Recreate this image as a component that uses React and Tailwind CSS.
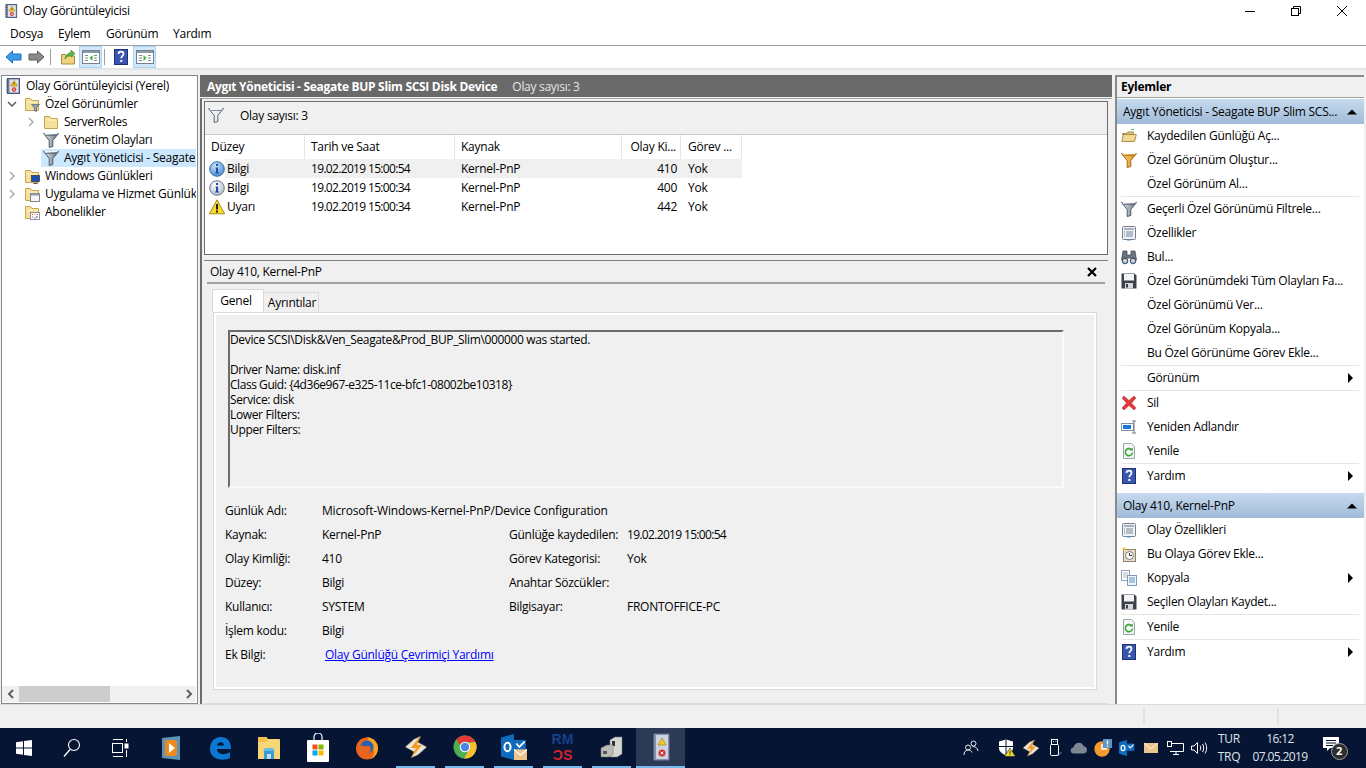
import React from 'react';

// --- small drawn icons ---
const Svg = ({ s = 16, children, className = '' }) => (
  <svg width={s} height={s} viewBox="0 0 16 16" className={`shrink-0 ${className}`}>
    {children}
  </svg>
);

const LogBook = ({ s = 16 }) => (
  <Svg s={s}>
    <rect x="2.5" y="0.5" width="12" height="15" fill="#7f8fb0" stroke="#46557a" />
    <rect x="4.5" y="1.5" width="9" height="13" fill="#dfe4ec" />
    <path d="M1 2h3M1 4h3M1 6h3M1 8h3M1 10h3M1 12h3M1 14h3" stroke="#5a6478" strokeWidth="0.9" />
    <path d="M9 2.5 L12.5 8 H5.5 Z" fill="#f6c91e" stroke="#a97f10" strokeWidth="0.6" />
    <path d="M9 4.5v2" stroke="#222" strokeWidth="0.9" />
    <circle cx="9" cy="11.5" r="2.3" fill="#d6332f" />
    <path d="M8 10.5l2 2M10 10.5l-2 2" stroke="#fff" strokeWidth="0.7" />
  </Svg>
);

const funnelShades = {
  grey: ['#e4eaf0', '#66737f', '#4f5a66'],
  white: ['#ffffff', '#d5dbe1', '#5b646e'],
  orange: ['#fbd36a', '#e6871c', '#9a6a20'],
};

const Funnel = ({ s = 16, shade = 'grey' }) => {
  const [from, to, line] = funnelShades[shade];
  return (
    <Svg s={s}>
      <defs>
        <linearGradient id={`funnel-${shade}`} x1="0" y1="0" x2="1" y2="0">
          <stop offset="0" stopColor={from} />
          <stop offset="1" stopColor={to} />
        </linearGradient>
      </defs>
      <path d="M0.5 1.5h15L9.8 8.5v6L6.2 15.5v-7z" fill={`url(#funnel-${shade})`} stroke={line} />
      <path d="M1.500 1.500h13" stroke="#f4f7fa" />
      <path d="M2.5 3.500h11" stroke={line} strokeWidth="0.7" />
    </Svg>
  );
};

const FolderBase = () => (
  <>
    <path d="M1.5 2.5h5l1.5 2h6.5v10h-13z" fill="#f6df98" stroke="#c7a653" />
    <path d="M2.5 5.5h11v1h-11z" fill="#fdf3cf" />
  </>
);

const FolderPlain = () => (
  <Svg>
    <FolderBase />
  </Svg>
);

const FolderFunnel = () => (
  <Svg>
    <FolderBase />
    <path d="M7.5 8.5h8l-3 3.5v3.5l-2-.8V12z" fill="#93a2b2" stroke="#56606c" strokeWidth="0.7" />
  </Svg>
);

const FolderMonitor = () => (
  <Svg>
    <FolderBase />
    <rect x="7.5" y="7.5" width="8" height="6" fill="#1d4fb8" stroke="#333" strokeWidth="0.7" />
    <path d="M9.5 15.5h4" stroke="#555" />
  </Svg>
);

const FolderWindow = () => (
  <Svg>
    <FolderBase />
    <rect x="6.5" y="7.5" width="9" height="8" fill="#f5f5f5" stroke="#667" strokeWidth="0.8" />
    <rect x="6.5" y="7.5" width="9" height="2" fill="#8f9db0" />
  </Svg>
);

const FolderCalendar = () => (
  <Svg>
    <FolderBase />
    <rect x="6.5" y="8.5" width="9" height="7" fill="#fff" stroke="#778" strokeWidth="0.8" />
    <path d="M8 10.5h1M10.5 10.5h1M13 10.5h1M8 13h1M13 13h1" stroke="#d14a3a" />
    <path d="M10 13.5l1 1 2-2.5" stroke="#2e6fc7" fill="none" strokeWidth="0.8" />
  </Svg>
);

const Chevron = ({ open, color = '#a6a6a6' }) => (
  <svg width="12" height="12" viewBox="0 0 12 12" className="shrink-0">
    {open ? (
      <path d="M2 4l4 4 4-4" fill="none" stroke="#555" strokeWidth="1.4" />
    ) : (
      <path d="M4 2l4 4-4 4" fill="none" stroke={color} strokeWidth="1.4" />
    )}
  </svg>
);

const InfoIcon = ({ active }) => (
  <Svg>
    <defs>
      <radialGradient id={active ? 'infoA' : 'infoB'} cx="0.4" cy="0.3" r="0.8">
        <stop offset="0" stopColor={active ? '#c7e3fb' : '#ffffff'} />
        <stop offset="1" stopColor={active ? '#3a82cf' : '#a9b6c8'} />
      </radialGradient>
    </defs>
    <circle cx="8" cy="8" r="7.3" fill={`url(#${active ? 'infoA' : 'infoB'})`} stroke={active ? '#3b6ea5' : '#70798a'} />
    <rect x="7" y="3" width="2" height="2" fill="#1c4fa8" />
    <path d="M6.5 6.5h2.5v5h1v1h-4v-1h1v-4h-.5z" fill="#1c4fa8" />
  </Svg>
);

const WarnIcon = () => (
  <Svg>
    <path d="M8 0.8 L15.6 14.8 H0.4 Z" fill="#f8d92e" stroke="#a88a18" />
    <rect x="7" y="5" width="2" height="5.5" fill="#222" />
    <rect x="7" y="11.5" width="2" height="2" fill="#222" />
  </Svg>
);

const HelpIcon = ({ s = 16 }) => (
  <Svg s={s}>
    <rect x="1.5" y="0.5" width="13" height="15" fill="#3856b0" stroke="#1f3278" />
    <path d="M5.5 5c0-3.2 5-3.2 5 0 0 2-2.2 2-2.2 4.2" fill="none" stroke="#fff" strokeWidth="1.7" />
    <rect x="7.3" y="11" width="2" height="2" fill="#fff" />
  </Svg>
);

const Arrow = ({ left, fill, stroke }) => (
  <svg width="17" height="14" viewBox="0 0 17 14" className="shrink-0">
    <path
      d={left ? 'M1 7 L7.5 1 V4 H16 V10 H7.5 V13 Z' : 'M16 7 L9.5 1 V4 H1 V10 H9.5 V13 Z'}
      fill={fill}
      stroke={stroke}
    />
  </svg>
);

const PaneIcon = ({ right }) => (
  <svg width="18" height="14" viewBox="0 0 18 14">
    <rect x="0.5" y="0.5" width="17" height="13" fill="#fff" stroke="#75808e" />
    <rect x="1" y="1" width="16" height="2" fill="#8e99a6" />
    <path d="M3 5.5h3M3 8h3M3 10.5h3M12 5.5h3M12 8h3M12 10.5h3" stroke="#7f8a98" />
    {right ? <path d="M7.5 5l3 3-3 3z" fill="#3fb536" /> : <path d="M10.5 5l-3 3 3 3z" fill="#3fb536" />}
  </svg>
);

const UpFolder = () => (
  <Svg>
    <path d="M1.5 5.5h4l1 1.5h8v8h-13z" fill="#f0d27e" stroke="#a98b3d" />
    <path d="M5 10c.5-4 3-6 6-6.5V1l4 3.5L11 8V6c-2.5.3-4.5 1.5-6 4z" fill="#58b947" stroke="#2f8228" strokeWidth="0.6" />
  </Svg>
);

const OpenFolder = () => (
  <Svg>
    <path d="M1.5 5.5h4l1-1.5h6v2.5h-11z" fill="#d9c07f" stroke="#a78c4d" />
    <path d="M0.8 13.5l1.5-7h13l-1.8 7z" fill="#f0d995" stroke="#a78c4d" />
    <path d="M10 1.5h3" stroke="#59b84a" />
  </Svg>
);

const Properties = () => (
  <Svg>
    <rect x="1.5" y="1.5" width="13" height="13" rx="1" fill="#eef1f5" stroke="#77818e" />
    <rect x="3" y="3" width="10" height="2" fill="#a7b1bd" />
    <path d="M5 7h7M5 9h7M5 11h7" stroke="#7d8896" />
    <path d="M3 7h1M3 9h1M3 11h1" stroke="#7d8896" />
    <path d="M6 15h4" stroke="#3d9be0" />
  </Svg>
);

const Binoculars = () => (
  <Svg>
    <path d="M2 2h4v4h4V2h4l1.500 9h-5L10 9H6l-.5 2h-5z" fill="#6a7380" stroke="#39404a" strokeWidth="0.7" />
    <circle cx="4" cy="12" r="2.8" fill="#c7d2de" stroke="#39404a" />
    <circle cx="12" cy="12" r="2.8" fill="#c7d2de" stroke="#39404a" />
    <path d="M2.5 14h3M10.5 14h3" stroke="#2a8fe0" />
  </Svg>
);

const Floppy = () => (
  <Svg>
    <path d="M0.5 0.5h13l2 2v13H0.5z" fill="#3c424b" />
    <rect x="3" y="1" width="10" height="6.5" fill="#f4f4f4" />
    <rect x="4" y="10" width="8" height="5.5" fill="#d5d8dc" />
    <rect x="5" y="11" width="2" height="3.5" fill="#3c424b" />
  </Svg>
);

const RedX = () => (
  <Svg>
    <path d="M1 3l2-2 5 4.5L13 1l2 2-4.5 5 4.5 5-2 2-5-4.5L3 15l-2-2 4.5-5z" fill="#e0393a" stroke="#b5282a" strokeWidth="0.5" />
  </Svg>
);

const Rename = () => (
  <Svg>
    <rect x="0.5" y="4.5" width="12" height="7" fill="#fff" stroke="#8591a0" />
    <rect x="2" y="6" width="8" height="4" fill="#1878e0" />
    <path d="M11 2h4M13 2v12M11 14h4" stroke="#6f7883" fill="none" />
  </Svg>
);

const Refresh = () => (
  <Svg>
    <path d="M2.5 0.5h8l3 3v12h-11z" fill="#f5f6f7" stroke="#9aa3ad" />
    <path d="M11.5 9.5a3.6 3.6 0 1 1-1.2-3" fill="none" stroke="#3aa93a" strokeWidth="1.6" />
    <path d="M11.8 4.2v3.3H8.6z" fill="#3aa93a" />
  </Svg>
);

const TaskClock = () => (
  <Svg>
    <rect x="2.5" y="3.5" width="12" height="12" fill="#e9dcc0" stroke="#8b8374" />
    <circle cx="8.5" cy="9.5" r="4" fill="#fff" stroke="#777" />
    <path d="M8.5 7v2.5H11" stroke="#333" fill="none" />
    <path d="M3 0.5l.8 1.7 1.7.8-1.7.8L3 5.5l-.8-1.7L.5 3l1.7-.8z" fill="#f2b632" />
  </Svg>
);

const CopyIcon = () => (
  <Svg>
    <rect x="0.5" y="0.5" width="8" height="10" fill="#fff" stroke="#98a2ae" />
    <path d="M2 3h5M2 5h5M2 7h5" stroke="#b0b8c2" />
    <rect x="6.5" y="5.5" width="9" height="10" fill="#eef5fc" stroke="#7f9ab8" />
    <path d="M8 8h6M8 10h6M8 12h6" stroke="#5e90c7" />
  </Svg>
);

const Triangle = ({ up }) => (
  <svg width="12" height="12" viewBox="0 0 12 12" className="shrink-0">
    {up ? <path d="M1 8.5 L6 3.5 L11 8.5Z" fill="#000" /> : <path d="M3 1 L8 6 L3 11Z" fill="#000" />}
  </svg>
);

// --- taskbar icons ---
const WinLogo = () => (
  <svg width="16" height="16" viewBox="0 0 16 16">
    <path d="M0 2.2 L7 1.2 V7.5 H0z M8 1 L16 0 V7.5 H8z M0 8.5 H7 V14.8 L0 13.8z M8 8.5 H16 V16 L8 15z" fill="#fff" />
  </svg>
);

const SearchIcon = () => (
  <svg width="18" height="20" viewBox="0 0 18 20">
    <circle cx="11" cy="7" r="5.5" fill="none" stroke="#fff" strokeWidth="1.1" />
    <path d="M7 11.5L1 18.5" stroke="#fff" strokeWidth="1.3" />
  </svg>
);

const TaskView = () => (
  <svg width="18" height="20" viewBox="0 0 18 20" fill="none" stroke="#fff">
    <path d="M2 1.5h10M2 18.5h10" />
    <rect x="1.5" y="5.5" width="10" height="9" />
    <rect x="14" y="6" width="3" height="4" fill="#fff" />
    <path d="M15.5 1v3M15.5 12v7" />
  </svg>
);

const MediaIcon = () => (
  <svg width="20" height="24" viewBox="0 0 20 24">
    <path d="M1 2 L19 0 V24 L1 22z" fill="#5c93b8" />
    <rect x="4" y="4" width="12" height="16" rx="2" fill="#ee8a1d" />
    <path d="M8 7l6 5-6 5z" fill="#fff" />
  </svg>
);

const EdgeIcon = () => (
  <svg width="22" height="24" viewBox="0 0 22 24">
    <path d="M1 13C1 5 6 1 12 1c6 0 10 4 10 12H8c0 5 7 7 13 3v6c-8 4-20 1-20-9zM8 9.5h7C15 5 8.5 5 8 9.5z" fill="#0b78d4" />
  </svg>
);

const ExplorerIcon = () => (
  <svg width="22" height="24" viewBox="0 0 22 24">
    <path d="M0 1h8l2 2h11a1 1 0 0 1 1 1v19H0z" fill="#f7d774" />
    <path d="M0 1h9v5H0z" fill="#f1c04d" />
    <path d="M6 15h10v8H6z" fill="#3a9bd8" />
    <path d="M9 18h4v5H9z" fill="#bfe2f7" />
    <path d="M5 15h12l-2-3H7z" fill="#6ab8e6" />
  </svg>
);

const StoreIcon = () => (
  <svg width="24" height="30" viewBox="0 0 24 30">
    <path d="M8 8V4a4 4 0 0 1 8 0v4" fill="none" stroke="#fff" strokeWidth="1.2" />
    <rect x="1" y="7" width="22" height="22" rx="1" fill="#fff" />
    <rect x="6.5" y="11.5" width="5" height="5" fill="#f25022" />
    <rect x="12.5" y="11.5" width="5" height="5" fill="#7fba00" />
    <rect x="6.5" y="17.5" width="5" height="5" fill="#00a4ef" />
    <rect x="12.5" y="17.5" width="5" height="5" fill="#ffb900" />
  </svg>
);

const FirefoxIcon = () => (
  <svg width="24" height="26" viewBox="0 0 24 26">
    <circle cx="12" cy="13.5" r="11" fill="#e8641f" />
    <path d="M12 2c7 1 11 6 11 11s-3 9-7 11c3-3 4-7 2-11-1-3-4-6-6-11z" fill="#f6a623" />
    <circle cx="12" cy="12" r="6.5" fill="#2a5fb5" />
    <path d="M5 11c3-1 5 1 7 0 3-1 5 3 3 6-2 3-7 4-10 1-1-2-1-5 0-7z" fill="#e8641f" />
  </svg>
);

const BoltIcon = ({ s = 24 }) => (
  <svg width={s} height={s} viewBox="0 0 24 24">
    <path d="M1 12l9-8 7-3-3 6 9 5-9 8-7 3 3-6z" fill="#e9e4d4" stroke="#3a3a3a" strokeWidth="0.6" />
    <path d="M16 1L7 13h5l-5 10 11-13h-5z" fill="#f39a1f" />
  </svg>
);

const ChromeIcon = () => (
  <svg width="24" height="24" viewBox="0 0 24 24">
    <circle cx="12" cy="12" r="11.5" fill="#4caf50" />
    <path d="M12 .5A11.5 11.5 0 0 1 22.4 7H12a5 5 0 0 0-4.7 3.4L3.4 4.6A11.5 11.5 0 0 1 12 .5z" fill="#e53935" />
    <path d="M22.4 7A11.5 11.5 0 0 1 11 23.5L16.2 15A5 5 0 0 0 15.5 8z" fill="#fbc02d" />
    <circle cx="12" cy="12" r="5.3" fill="#fff" />
    <circle cx="12" cy="12" r="4.2" fill="#4a86e8" />
  </svg>
);

const OutlookIcon = ({ s = 22, mail }) => (
  <svg width={s} height={s} viewBox="0 0 22 22">
    <path d="M0 3 L11 0 V22 L0 19z" fill="#0f6cbd" />
    <rect x="11" y="5" width="10" height="10" fill="#0f6cbd" />
    <path d="M13 8l2.5 3L20 6.5" stroke="#fff" strokeWidth="1.5" fill="none" />
    <ellipse cx="5.5" cy="11" rx="2.6" ry="3.6" fill="none" stroke="#fff" strokeWidth="1.7" />
    {mail && <rect x="11" y="13" width="11" height="9" fill="#edc48b" />}
    {mail && <path d="M11 13l5.5 5 5.5-5" fill="none" stroke="#fff" strokeWidth="1" />}
  </svg>
);

const ServerIcon = () => (
  <svg width="24" height="24" viewBox="0 0 24 24">
    <path d="M10 5l5-3h7v17l-5 3h-7z" fill="#d6d6d0" stroke="#777" strokeWidth="0.5" />
    <rect x="12" y="6" width="3" height="5" fill="#333" />
    <path d="M1 13l6-3h6v9l-4 3H1z" fill="#bcbcb6" stroke="#777" strokeWidth="0.5" />
    <rect x="3" y="16" width="4" height="3" fill="#555" />
  </svg>
);

const EventTaskIcon = () => (
  <svg width="20" height="28" viewBox="0 0 20 28">
    <rect x="2.5" y="0.5" width="16" height="27" rx="1" fill="#8090ad" stroke="#4e5b77" />
    <rect x="5" y="2" width="12" height="24" fill="#cdd4df" />
    <path d="M11 5l4 7H7z" fill="#f6c91e" stroke="#8a6c10" strokeWidth="0.5" />
    <circle cx="11" cy="20" r="3.5" fill="#d6332f" />
    <path d="M9.7 18.7l2.6 2.6M12.3 18.7l-2.6 2.6" stroke="#fff" />
  </svg>
);

// --- tray icons ---
const People = () => (
  <svg width="16" height="16" viewBox="0 0 16 16" fill="none" stroke="#fff" strokeWidth="0.9">
    <circle cx="10.5" cy="3.5" r="2.5" />
    <circle cx="5" cy="7.5" r="2.5" />
    <path d="M1 15c0-3 1.5-5 4-5s3.5 1 4 2.5" />
    <path d="M9.5 6.5c3 0 5 1.5 5.5 4.5" />
  </svg>
);

const Shield = () => (
  <svg width="18" height="18" viewBox="0 0 18 18">
    <path d="M1 2.5 L8 0.5 L15 2.5 V9 C15 13 11 15 8 16.5 C5 15 1 13 1 9z" fill="#fff" />
    <path d="M8 0.5v16M1 7.5h14" stroke="#071534" />
    <path d="M12 9l5.5 8.5H6.5z" fill="#f8d92e" stroke="#071534" strokeWidth="0.6" />
    <path d="M12 12v2.5M12 15.2v1" stroke="#222" />
  </svg>
);

const Usb = () => (
  <svg width="14" height="18" viewBox="0 0 14 18" fill="none" stroke="#fff">
    <rect x="2.5" y="5.5" width="8" height="11" rx="1" />
    <rect x="3.5" y="0.5" width="6" height="5" />
    <path d="M5 2.5h.8M7.5 2.5h.8" />
    <path d="M9 15l1.5 1.5L13.5 13" stroke="#8894a8" strokeWidth="0.8" />
  </svg>
);

const Cloud = () => (
  <svg width="18" height="12" viewBox="0 0 18 12">
    <path d="M4 11.5a3 3 0 0 1-.6-6C4.2 2.5 6.5.8 9 .8c2.4 0 4 1.3 4.6 3.4a3.7 3.7 0 0 1 .4 7.3z" fill="#7e8794" />
  </svg>
);

const OrangeClock = () => (
  <svg width="18" height="18" viewBox="0 0 18 18">
    <circle cx="8" cy="10" r="7.7" fill="#f29a2e" />
    <path d="M8 5v5h5" stroke="#fff" strokeWidth="1.4" fill="none" />
    <rect x="9" y="0" width="9" height="9" fill="#5d93c5" />
    <path d="M13.5 1.5v4M13.5 6.5v1.2" stroke="#fff" strokeWidth="1.3" />
  </svg>
);

const MailTray = () => (
  <svg width="14" height="10" viewBox="0 0 14 10">
    <rect width="14" height="10" fill="#edc48b" />
    <path d="M0 0l7 6 7-6" fill="none" stroke="#fff" strokeWidth="0.9" />
  </svg>
);

const Network = () => (
  <svg width="17" height="14" viewBox="0 0 17 14" fill="none" stroke="#fff">
    <path d="M4.5 2.5h12v8H3" />
    <path d="M9 10.5v3M6 13.5h6" />
    <rect x="0.5" y="0.5" width="4" height="5" fill="#071534" />
  </svg>
);

const Volume = () => (
  <svg width="17" height="14" viewBox="0 0 17 14" fill="none" stroke="#fff">
    <path d="M0.5 5h2.5l3.5-3.5v11L3 9H0.5z" />
    <path d="M9 4.5c1 1.5 1 3.5 0 5M11.5 3c1.6 2.5 1.6 5.500 0 8M14 1.500c2.200 3.500 2.200 7.500 0 11" />
  </svg>
);

// --- left tree ---
const treeRows = [
  { text: 'Olay Görüntüleyicisi (Yerel)', icon: <LogBook />, pad: 'pl-[1px]', chevron: null, noSlot: true },
  { text: 'Özel Görünümler', icon: <FolderFunnel />, pad: 'pl-[4px]', chevron: 'open' },
  { text: 'ServerRoles', icon: <FolderPlain />, pad: 'pl-[23px]', chevron: 'closed' },
  { text: 'Yönetim Olayları', icon: <Funnel />, pad: 'pl-[23px]', chevron: 'none' },
  { text: 'Aygıt Yöneticisi - Seagate', icon: <Funnel />, pad: 'pl-[23px]', chevron: 'none', selected: true },
  { text: 'Windows Günlükleri', icon: <FolderMonitor />, pad: 'pl-[4px]', chevron: 'closed' },
  { text: 'Uygulama ve Hizmet Günlük', icon: <FolderWindow />, pad: 'pl-[4px]', chevron: 'closed' },
  { text: 'Abonelikler', icon: <FolderCalendar />, pad: 'pl-[4px]', chevron: 'none' },
];

const TreeRow = ({ row }) => (
  <div className={`flex h-[18px] items-center ${row.pad}`}>
    {!row.noSlot && (
      <span className="flex w-[16px] shrink-0 items-center">
        {row.chevron === 'open' && <Chevron open />}
        {row.chevron === 'closed' && <Chevron />}
      </span>
    )}
    <div className={`flex h-[18px] min-w-0 flex-1 items-center pl-[2px] ${row.selected ? 'bg-[#cce8ff]' : ''}`}>
      {row.icon}
      <span className="ml-[5px] overflow-hidden whitespace-nowrap">{row.text}</span>
    </div>
  </div>
);

const LeftTree = () => (
  <div className="ml-px flex w-[197px] flex-col border border-[#828790] bg-white pr-[1px] pb-[1px]">
    <div className="min-w-0 flex-1 overflow-hidden pt-px">
      {treeRows.map((row) => (
        <TreeRow key={row.text} row={row} />
      ))}
    </div>
    <div className="flex h-[16px] items-center bg-[#f0f0f0] pl-[2px]">
      <svg width="14" height="10" viewBox="0 0 14 10" className="shrink-0">
        <path d="M9 1L5 5l4 4" fill="none" stroke="#606060" strokeWidth="2" />
      </svg>
      <div className="ml-[1px] h-[16px] w-[91px] bg-[#cdcdcd]" />
      <div className="flex-1" />
      <svg width="14" height="10" viewBox="0 0 14 10" className="shrink-0">
        <path d="M5 1l4 4-4 4" fill="none" stroke="#606060" strokeWidth="2" />
      </svg>
    </div>
  </div>
);

// --- event list ---
const columns = [
  { label: 'Düzey', cls: 'w-[100px] pl-[6px]' },
  { label: 'Tarih ve Saat', cls: 'w-[150px] pl-[6px]' },
  { label: 'Kaynak', cls: 'w-[167px] pl-[6px]' },
  { label: 'Olay Ki...', cls: 'w-[59px] justify-end pr-[4px]' },
  { label: 'Görev ...', cls: 'w-[61px] pl-[7px]' },
];

const events = [
  { icon: <InfoIcon active />, level: 'Bilgi', date: '19.02.2019 15:00:54', source: 'Kernel-PnP', id: '410', task: 'Yok', active: true },
  { icon: <InfoIcon />, level: 'Bilgi', date: '19.02.2019 15:00:34', source: 'Kernel-PnP', id: '400', task: 'Yok' },
  { icon: <WarnIcon />, level: 'Uyarı', date: '19.02.2019 15:00:34', source: 'Kernel-PnP', id: '442', task: 'Yok' },
];

const EventList = () => (
  <div className="flex h-[154px] flex-col border border-[#6d6d6d] bg-[#f0f0f0]">
    <div className="flex h-[33px] items-start border-b border-[#c8c8c8] pt-[5px] pl-[3px]">
      <Funnel shade="white" />
      <span className="ml-[16px]">Olay sayısı: 3</span>
    </div>
    <div className="flex-1 bg-white">
      <div className="flex h-[24px]">
        {columns.map((col) => (
          <div key={col.label} className={`flex items-center border-r border-[#e5e5e5] ${col.cls}`}>
            {col.label}
          </div>
        ))}
      </div>
      {events.map((ev) => (
        <div key={ev.id} className="flex h-[19px] w-[537px] items-center">
          <div className="flex w-[20px] shrink-0 justify-center pl-[3px]">{ev.icon}</div>
          <div className={`flex h-[19px] flex-1 items-center ${ev.active ? 'bg-[#f0f0f0]' : ''}`}>
            <span className="w-[84px] pl-[2px]">{ev.level}</span>
            <span className="w-[150px] pl-[2px] tracking-[-0.67px]">{ev.date}</span>
            <span className="w-[163px] pl-[2px]">{ev.source}</span>
            <span className="w-[63px] pr-[8px] text-right">{ev.id}</span>
            <span className="pl-[3px]">{ev.task}</span>
          </div>
        </div>
      ))}
    </div>
  </div>
);

// --- event detail ---
const fields = [
  ['Kaynak:', 'Kernel-PnP', 'Günlüğe kaydedilen:', '19.02.2019 15:00:54'],
  ['Olay Kimliği:', '410', 'Görev Kategorisi:', 'Yok'],
  ['Düzey:', 'Bilgi', 'Anahtar Sözcükler:', ''],
  ['Kullanıcı:', 'SYSTEM', 'Bilgisayar:', 'FRONTOFFICE-PC'],
  ['İşlem kodu:', 'Bilgi', '', ''],
];

const EventDetail = () => (
  <div className="flex flex-1 flex-col border-t border-b border-t-[#808080] border-b-[#dcdcdc]">
    <div className="mx-[3px] flex h-[23px] items-center justify-between border-b-2 border-[#a0a0a0] pr-[8px] pl-[3px]">
      <span>Olay 410, Kernel-PnP</span>
      <svg width="10" height="10" viewBox="0 0 10 10">
        <path d="M1 1l8 8M9 1l-8 8" stroke="#000" strokeWidth="2.2" />
      </svg>
    </div>
    <div className="mt-[6px] flex h-[22px] items-end pl-[8px]">
      <div className="flex h-[23px] w-[52px] items-center justify-center border border-b-0 border-[#d9d9d9] bg-white pr-[4px]">Genel</div>
      <div className="flex h-[20px] w-[55px] items-center justify-center border-t border-r border-[#d9d9d9] pl-[2px]">Ayrıntılar</div>
    </div>
    <div className="ml-[9px] h-[378px] w-[884px] border border-[#d9d9d9]">
      <div className="h-full border-2 border-white px-[9px] pt-[15px]">
        <div className="ml-[3px] h-[158px] w-[836px] border-2 border-t-[#6b6b6b] border-r-[#fafafa] border-b-[#fafafa] border-l-[#6b6b6b] leading-[15px] tracking-[-0.35px]">
          <div>Device SCSI\Disk&amp;Ven_Seagate&amp;Prod_BUP_Slim\000000 was started.</div>
          <div className="mt-[15px]">Driver Name: disk.inf</div>
          <div className="tracking-[-0.45px]">Class Guid: {'{4d36e967-e325-11ce-bfc1-08002be10318}'}</div>
          <div>Service: disk</div>
          <div>Lower Filters:</div>
          <div>Upper Filters:</div>
        </div>
        <div className="mt-[11px] grid grid-cols-[97px_187px_118px_auto] auto-rows-[24px] items-center">
          <span>Günlük Adı:</span>
          <span className="col-span-3 tracking-[-0.18px]">Microsoft-Windows-Kernel-PnP/Device Configuration</span>
          {fields.map((f) => (
            <React.Fragment key={f[0]}>
              <span>{f[0]}</span>
              <span>{f[1]}</span>
              <span>{f[2]}</span>
              <span className={f[0] === 'Kaynak:' ? 'tracking-[-0.67px]' : ''}>{f[3]}</span>
            </React.Fragment>
          ))}
          <span>Ek Bilgi:</span>
          <a href="#" className="col-span-3 ml-[3px] text-[#0000ff] underline">
            Olay Günlüğü Çevrimiçi Yardımı
          </a>
        </div>
      </div>
    </div>
  </div>
);

// --- actions panel ---
const SectionHead = ({ children }) => (
  <div className="flex h-[25px] items-center justify-between bg-gradient-to-b from-[#c6daee] to-[#a0bbd8] pr-[6px] pl-[6px]">
    <span>{children}</span>
    <Triangle up />
  </div>
);

const Action = ({ icon, children, more }) => (
  <div className="flex h-[24px] items-center pr-[7px] pl-[4px]">
    <span className="flex w-[26px] shrink-0 items-center">{icon}</span>
    <span className="flex-1 whitespace-nowrap">{children}</span>
    {more && <Triangle />}
  </div>
);

const Sep = () => <div className="mr-[5px] ml-[4px] h-px bg-[#e5e5e5]" />;

const ActionsPanel = () => (
  <div className="ml-[3px] flex w-[249px] flex-col border-t-2 border-l-2 border-[#8a8a8a] bg-white">
    <div className="flex h-[21px] items-center border-b border-[#a0a0a0] bg-[#f0f0f0] pl-[4px] font-bold">Eylemler</div>
    <div className="h-px" />
    <SectionHead>Aygıt Yöneticisi - Seagate BUP Slim SCS...</SectionHead>
    <Action icon={<OpenFolder />}>Kaydedilen Günlüğü Aç...</Action>
    <Action icon={<Funnel shade="orange" />}>Özel Görünüm Oluştur...</Action>
    <Action>Özel Görünüm Al...</Action>
    <Sep />
    <Action icon={<Funnel />}>Geçerli Özel Görünümü Filtrele...</Action>
    <Action icon={<Properties />}>Özellikler</Action>
    <Action icon={<Binoculars />}>Bul...</Action>
    <Action icon={<Floppy />}>Özel Görünümdeki Tüm Olayları Fa...</Action>
    <Action>Özel Görünümü Ver...</Action>
    <Action>Özel Görünüm Kopyala...</Action>
    <Action>Bu Özel Görünüme Görev Ekle...</Action>
    <Sep />
    <Action more>Görünüm</Action>
    <Sep />
    <Action icon={<RedX />}>Sil</Action>
    <Action icon={<Rename />}>Yeniden Adlandır</Action>
    <Action icon={<Refresh />}>Yenile</Action>
    <Sep />
    <Action icon={<HelpIcon />} more>Yardım</Action>
    <div className="h-[5px]" />
    <SectionHead>Olay 410, Kernel-PnP</SectionHead>
    <Action icon={<Properties />}>Olay Özellikleri</Action>
    <Action icon={<TaskClock />}>Bu Olaya Görev Ekle...</Action>
    <Action icon={<CopyIcon />} more>Kopyala</Action>
    <Action icon={<Floppy />}>Seçilen Olayları Kaydet...</Action>
    <Sep />
    <Action icon={<Refresh />}>Yenile</Action>
    <Sep />
    <Action icon={<HelpIcon />} more>Yardım</Action>
  </div>
);

// --- taskbar ---
const pinned = [
  { key: 'media', icon: <MediaIcon /> },
  { key: 'edge', icon: <EdgeIcon /> },
  { key: 'explorer', icon: <ExplorerIcon /> },
  { key: 'store', icon: <StoreIcon /> },
  { key: 'firefox', icon: <FirefoxIcon /> },
  { key: 'winamp', icon: <BoltIcon />, running: true },
  { key: 'chrome', icon: <ChromeIcon />, running: true },
  { key: 'outlook', icon: <OutlookIcon s={26} mail />, running: true },
  {
    key: 'rmos',
    running: true,
    icon: (
      <div className="flex flex-col items-center font-['Liberation_Sans',sans-serif] text-[14px] leading-[16px] font-bold tracking-normal">
        <span className="text-[#173f8a]">RM</span>
        <span className="text-[#d3232a]">ƆS</span>
      </div>
    ),
  },
  { key: 'server', icon: <ServerIcon />, running: true },
  { key: 'events', icon: <EventTaskIcon />, active: true },
];

const tray = [
  { key: 'shield', icon: <Shield /> },
  { key: 'winamp', icon: <BoltIcon s={18} /> },
  { key: 'usb', icon: <Usb /> },
  { key: 'cloud', icon: <Cloud /> },
  { key: 'clock', icon: <OrangeClock /> },
  { key: 'outlook', icon: <OutlookIcon s={16} /> },
  { key: 'mail', icon: <MailTray /> },
  { key: 'net', icon: <Network /> },
  { key: 'vol', icon: <Volume /> },
];

const Taskbar = () => (
  <div className="flex h-[40px] bg-[#071534] text-[#dfe3ea]">
    <div className="flex w-[48px] items-center justify-center"><WinLogo /></div>
    <div className="flex w-[48px] items-center justify-center"><SearchIcon /></div>
    <div className="flex w-[48px] items-center justify-center"><TaskView /></div>
    <div className="ml-[2px] flex">
      {pinned.map((item) => (
        <div key={item.key} className={`flex w-[49px] flex-col ${item.active ? 'bg-[#2c3a55]' : ''}`}>
          <div className="flex flex-1 items-center justify-center">{item.icon}</div>
          {item.active && <div className="h-[2px] bg-[#76b9ed]" />}
          {item.running && <div className="mx-[5px] h-[2px] bg-[#76b9ed]" />}
        </div>
      ))}
    </div>
    <div className="ml-auto flex items-center pr-[9px]">
      <div className="mr-[6px] flex w-[36px] justify-center"><People /></div>
      {tray.map((item) => (
        <div key={item.key} className="flex w-[24px] justify-center">{item.icon}</div>
      ))}
      <div className="flex w-[36px] flex-col items-center leading-[18px]">
        <span>TUR</span>
        <span>TRQ</span>
      </div>
      <div className="flex w-[66px] flex-col items-center leading-[18px] tracking-[-0.6px]">
        <span>16:12</span>
        <span>07.05.2019</span>
      </div>
      <div className="flex w-[44px] items-start justify-center">
        <svg width="16" height="15" viewBox="0 0 16 15">
          <path d="M0 0h16v11H7l-3 3v-3H0z" fill="#fff" />
          <path d="M3 3.500h10M3 6h10M3 8.500h7" stroke="#071534" />
        </svg>
        <span className="mt-[6px] -ml-[8px] flex h-[17px] w-[17px] items-center justify-center rounded-full border border-[#a0a0a0] bg-[#2e2e2e] text-[11px] font-bold text-white">
          2
        </span>
      </div>
    </div>
  </div>
);

export default function App() {
  return (
    <div className="flex h-[768px] w-[1366px] flex-col overflow-hidden bg-[#f0f0f0] font-['Open_Sans',sans-serif] text-[12px] tracking-[-0.25px] text-black">
      {/* title bar */}
      <div className="flex h-[22px] items-center bg-white pl-[4px]">
        <LogBook s={14} />
        <span className="ml-[5px]">Olay Görüntüleyicisi</span>
        <div className="ml-auto flex pr-px">
          <div className="flex w-[46px] justify-center">
            <svg width="10" height="10" viewBox="0 0 10 10"><path d="M0 5.500h10" stroke="#000" /></svg>
          </div>
          <div className="flex w-[46px] justify-center">
            <svg width="10" height="10" viewBox="0 0 10 10" fill="none" stroke="#000">
              <rect x="0.500" y="2.500" width="7" height="7" />
              <path d="M2.500 2.500v-2h7v7h-2" />
            </svg>
          </div>
          <div className="flex w-[46px] justify-center">
            <svg width="10" height="10" viewBox="0 0 10 10"><path d="M0 0l10 10M10 0L0 10" stroke="#000" /></svg>
          </div>
        </div>
      </div>
      {/* menu */}
      <div className="flex h-[24px] items-center border-b border-[#a0a0a0] bg-white pl-[10px]">
        <span className="w-[48px]">Dosya</span>
        <span className="w-[48px]">Eylem</span>
        <span className="w-[67px]">Görünüm</span>
        <span>Yardım</span>
      </div>
      {/* toolbar */}
      <div className="flex h-[24px] items-center border-b-2 border-[#e5e5e5] bg-white pl-[5px]">
        <Arrow left fill="#3c9be8" stroke="#1d70bd" />
        <div className="ml-[6px]"><Arrow fill="#8a8a8a" stroke="#5f5f5f" /></div>
        <div className="mx-[5px] h-[16px] w-px bg-[#a0a0a0]" />
        <div className="ml-[4px]"><UpFolder /></div>
        <div className="ml-[3px] flex h-[22px] w-[23px] items-center justify-center border border-[#a8d4f5] bg-[#d3e9fb]"><PaneIcon /></div>
        <div className="mx-[2px] h-[16px] w-px bg-[#a0a0a0]" />
        <div className="ml-[6px]"><HelpIcon /></div>
        <div className="ml-[4px] flex h-[22px] w-[23px] items-center justify-center border border-[#a8d4f5] bg-[#d3e9fb]"><PaneIcon right /></div>
      </div>
      {/* main */}
      <div className="flex h-[634px] pt-[5px]">
        <LeftTree />
        <div className="ml-[2px] flex w-[912px] flex-col">
          <div className="flex h-[22px] items-center bg-[#696969] pt-[2px] pl-[7px] font-bold tracking-[-0.3px] text-white">
            <span>Aygıt Yöneticisi - Seagate BUP Slim SCSI Disk Device</span>
            <span className="ml-[15px] font-normal text-[#e6e6e6]">Olay sayısı: 3</span>
          </div>
          <div className="mt-px flex flex-1 flex-col border-t border-l-2 border-t-[#a0a0a0] border-l-[#6d6d6d] pt-[2px] pr-[4px] pl-[2px]">
            <EventList />
            <div className="h-[5px]" />
            <EventDetail />
          </div>
        </div>
        <ActionsPanel />
      </div>
      {/* status bar */}
      <div className="flex h-[24px] items-stretch border-t border-[#dcdcdc] py-[3px]">
        <div className="w-[1145px] border-r-2 border-[#e2e2e2]" />
        <div className="w-[134px] border-r-2 border-[#e2e2e2]" />
      </div>
      <Taskbar />
    </div>
  );
}
